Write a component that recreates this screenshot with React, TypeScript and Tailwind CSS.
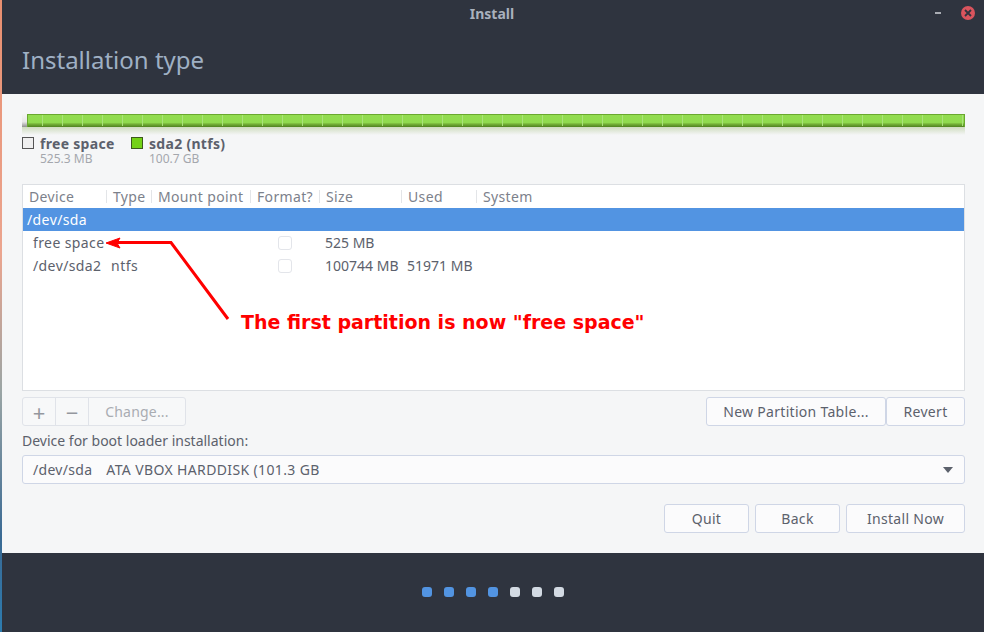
const columns = [
  { label: 'Device', width: 'w-[84px]' },
  { label: 'Type', width: 'w-[45px]' },
  { label: 'Mount point', width: 'w-[99px]' },
  { label: 'Format?', width: 'w-[69px]' },
  { label: 'Size', width: 'w-[82px]' },
  { label: 'Used', width: 'w-[75px]' },
  { label: 'System', width: 'flex-1' },
];

const ticks = Array.from({ length: 47 }, (_, i) => i);
const steps = [true, true, true, true, false, false, false];

function PartitionRow({ device, type, size, used }: { device: string; type?: string; size: string; used?: string }) {
  return (
    <div className="flex h-[23px] items-center text-[14px] text-[#5c616c]">
      <span className="w-[88px] shrink-0 pl-[10px] tracking-[0.4px] whitespace-nowrap">{device}</span>
      <span className="w-[46px] shrink-0 tracking-[0.5px]">{type}</span>
      <span className="w-[121px] shrink-0" />
      <span className="flex w-[47px] shrink-0">
        <span className="h-[14px] w-[14px] rounded-[3px] border border-[#e3e5ea] bg-white" />
      </span>
      <span className="w-[82px] shrink-0 whitespace-nowrap">{size}</span>
      <span className="whitespace-nowrap">{used}</span>
    </div>
  );
}

function Button({ label, className }: { label: string; className: string }) {
  return (
    <button className={`h-[29px] rounded-[3px] border border-[#cfd6e6] bg-[#fbfbfc] text-[14px] tracking-[0.3px] text-[#5c616c] ${className}`}>
      {label}
    </button>
  );
}

export default function App() {
  return (
    <div className="relative flex h-[632px] w-[984px] overflow-hidden font-['Noto_Sans',sans-serif]">
      {/* desktop wallpaper peeking out at the left */}
      <div className="w-[2px] shrink-0 bg-[linear-gradient(180deg,#e98f70_0%,#eba58f_40%,#9aa5a5_62%,#3a6a94_85%,#2d7cb0_100%)]" />

      <div className="flex w-[982px] flex-col">
        <header className="flex h-[94px] flex-col bg-[#2f343f]">
          <div className="relative flex h-[28px] items-center justify-center pb-[2px]">
            <span className="pr-[2px] text-[14px] font-bold text-[#a9b1bd]">Install</span>
            <span className="absolute left-[933px] top-[12px] h-[2px] w-[6px] bg-[#a9acb3]" />
            <span className="absolute left-[959px] top-[6px] flex h-[14px] w-[14px] items-center justify-center rounded-full bg-[#d9545d]">
              <svg width="8" height="8" viewBox="0 0 8 8">
                <path d="M1 1l6 6M7 1l-6 6" stroke="#2f343f" strokeWidth="1.8" />
              </svg>
            </span>
          </div>
          <h1 className="pl-[20px] pt-[13px] text-[24px] leading-[38px] text-[#9fb0c4]">Installation type</h1>
        </header>

        <main className="flex h-[459px] flex-col bg-[#f5f6f7] pl-[20px] pr-[19px]">
          {/* partition bar */}
          <div className="relative mt-[20px] flex h-[13px] w-[943px] shrink-0 overflow-hidden">
            <div className="w-[5px] bg-[linear-gradient(180deg,#f4f4f4,#e8e8e8_60%,#8f8f8f)]" />
            <div className="flex-1 border-x border-t border-[#69a82f] bg-[linear-gradient(180deg,#92dc50_0%,#90db4e_62%,#74b036_76%,#4f8220_100%)]" />
            {ticks.map((t) => (
              <span key={t} className="absolute top-[1px] h-[11px] w-px bg-[#a9e27a]" style={{ left: 20 + t * 20 }} />
            ))}
          </div>
          <div className="h-[8px] w-[943px] shrink-0 bg-[linear-gradient(180deg,#cfdcbf,#f5f6f7)]" />

          {/* legend */}
          <div className="flex h-[34px] shrink-0">
            <span className="mt-[2px] h-[12px] w-[12px] shrink-0 border border-[#555] bg-[#efefef]" />
            <div className="ml-[6px] mt-[1px] w-[91px]">
              <div className="text-[14px] leading-[16px] font-bold tracking-[0.3px] text-[#5c616c]">free space</div>
              <div className="mt-[1px] text-[12px] leading-[12px] text-[#a4a7ad]">525.3 MB</div>
            </div>
            <span className="mt-[2px] h-[12px] w-[12px] shrink-0 border border-[#3c5a1c] bg-[#73d216]" />
            <div className="ml-[6px] mt-[1px]">
              <div className="text-[14px] leading-[16px] font-bold tracking-[0.3px] text-[#5c616c]">sda2 (ntfs)</div>
              <div className="mt-[1px] text-[12px] leading-[12px] text-[#a4a7ad]">100.7 GB</div>
            </div>
          </div>

          {/* partition table */}
          <div className="mt-[15px] h-[207px] w-[943px] shrink-0 border border-[#dcdfe3] bg-white">
            <div className="flex h-[23px] items-center text-[14px] tracking-[0.35px] text-[#7c818b]">
              {columns.map((c) => (
                <div key={c.label} className={`flex h-[13px] items-center border-r border-[#e3e5e8] pl-[6px] last:border-r-0 ${c.width}`}>
                  {c.label}
                </div>
              ))}
            </div>
            <div className="flex h-[23px] items-center bg-[#5294e2] pl-[4px] text-[14px] tracking-[0.4px] text-white">/dev/sda</div>
            <PartitionRow device="free space" size="525 MB" />
            <PartitionRow device="/dev/sda2" type="ntfs" size="100744 MB" used="51971 MB" />
          </div>

          {/* table actions */}
          <div className="mt-[6px] flex w-[943px] shrink-0 justify-between">
            <div className="flex h-[29px] rounded-[3px] border border-[#e0e3e9] bg-[#f7f8f9] text-[14px] text-[#a9acb2]">
              <span className="flex w-[33px] items-center justify-center border-r border-[#e0e3e9] text-[22px] leading-none text-[#94979e]">+</span>
              <span className="flex w-[33px] items-center justify-center border-r border-[#e0e3e9] text-[22px] leading-none text-[#94979e]">−</span>
              <span className="flex w-[96px] items-center justify-center tracking-[0.2px]">Change...</span>
            </div>
            <div className="flex">
              <Button label="New Partition Table..." className="w-[180px]" />
              <Button label="Revert" className="w-[79px]" />
            </div>
          </div>

          <div className="mt-[5px] h-[20px] shrink-0 text-[14px] leading-[20px] text-[#5c616c]">Device for boot loader installation:</div>

          <div className="mt-[4px] flex h-[29px] w-[943px] shrink-0 items-center rounded-[3px] border border-[#cfd6e6] bg-[#fbfbfc] pl-[10px] pr-[11px] text-[14px] text-[#5c616c]">
            <span className="tracking-[0.3px]">/dev/sda</span>
            <span className="ml-[14px] tracking-[0.37px] whitespace-nowrap">ATA VBOX HARDDISK (101.3 GB</span>
            <svg className="ml-auto" width="10" height="6" viewBox="0 0 10 6">
              <path d="M0 0h10L5 6z" fill="#5c616c" />
            </svg>
          </div>

          <div className="mt-[20px] flex w-[943px] shrink-0 justify-end gap-[6px]">
            <Button label="Quit" className="w-[85px]" />
            <Button label="Back" className="w-[85px]" />
            <Button label="Install Now" className="w-[119px]" />
          </div>
        </main>

        <footer className="flex flex-1 items-center justify-center gap-[12px] bg-[#2f343f] pb-[1px]">
          {steps.map((done, i) => (
            <span key={i} className={`h-[10px] w-[10px] rounded-[3px] ${done ? 'bg-[#5294e2]' : 'bg-[#d3dae3]'}`} />
          ))}
        </footer>
      </div>

      {/* red annotation drawn over the screenshot */}
      <svg className="pointer-events-none absolute left-0 top-0" width="984" height="632">
        <path d="M228 319L171 242.5H116" fill="none" stroke="#ff0000" strokeWidth="3" />
        <path d="M106 243L120 238L117 243L120 248Z" fill="#ff0000" stroke="#ff0000" />
      </svg>
      <span className="absolute left-[241px] top-[311px] whitespace-nowrap font-['DejaVu_Sans',sans-serif] text-[19px] font-bold leading-[22px] text-[#ff0000]">
        The first partition is now "free space"
      </span>
    </div>
  );
}
